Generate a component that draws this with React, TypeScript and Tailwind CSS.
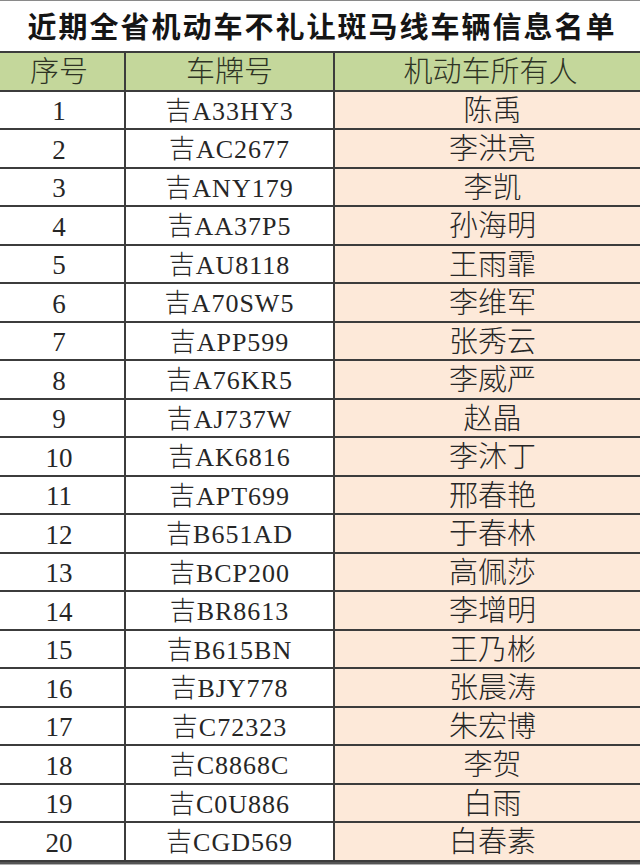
import React from "react";

const rows: [string, string, string][] = [
  ["1", "吉A33HY3", "陈禹"],
  ["2", "吉AC2677", "李洪亮"],
  ["3", "吉ANY179", "李凯"],
  ["4", "吉AA37P5", "孙海明"],
  ["5", "吉AU8118", "王雨霏"],
  ["6", "吉A70SW5", "李维军"],
  ["7", "吉APP599", "张秀云"],
  ["8", "吉A76KR5", "李威严"],
  ["9", "吉AJ737W", "赵晶"],
  ["10", "吉AK6816", "李沐丁"],
  ["11", "吉APT699", "邢春艳"],
  ["12", "吉B651AD", "于春林"],
  ["13", "吉BCP200", "高佩莎"],
  ["14", "吉BR8613", "李增明"],
  ["15", "吉B615BN", "王乃彬"],
  ["16", "吉BJY778", "张晨涛"],
  ["17", "吉C72323", "朱宏博"],
  ["18", "吉C8868C", "李贺"],
  ["19", "吉C0U886", "白雨"],
  ["20", "吉CGD569", "白春素"],
];

const font = {
  fontFamily: '"Liberation Serif", "Noto Sans CJK SC", serif',
};

export default function App() {
  return (
    <div className="w-[640px] h-[865px] bg-white overflow-hidden text-[#262626]" style={font}>
      <div className="h-[51px] border-t border-[#8a8a8a] flex items-center justify-center pl-[4px] pt-[5px]">
        <span className="text-[29px] font-bold text-[#151515] leading-none tracking-[2px] whitespace-nowrap">
          近期全省机动车不礼让斑马线车辆信息名单
        </span>
      </div>
      <div className="border-t-2 border-[#3c3c3c]">
        <div className="grid grid-cols-[126px_209px_1fr] h-[38.5px] bg-[#c4d79b] border-b-2 border-[#3c3c3c] text-[29px] font-light text-[#2e3324]">
          <div className="border-r-2 border-[#3c3c3c] flex items-center justify-center pt-[3px] pr-[6px] leading-none">序号</div>
          <div className="border-r-2 border-[#3c3c3c] flex items-center justify-center pt-[3px] leading-none">车牌号</div>
          <div className="flex items-center justify-center pt-[3px] pl-[6px] leading-none">机动车所有人</div>
        </div>
        {rows.map(([n, plate, name]) => (
          <div
            key={n}
            className="grid grid-cols-[126px_209px_1fr] h-[38.5px] border-b-2 border-[#3c3c3c] font-light"
          >
            <div className="bg-white border-r-2 border-[#3c3c3c] flex items-center justify-center pt-[4px] pr-[6px] leading-none text-[27px]">
              {n}
            </div>
            <div className="bg-white border-r-2 border-[#3c3c3c] flex items-center justify-center pt-[4px] leading-none tracking-[1px] text-[26px]">
              {plate}
            </div>
            <div className="bg-[#fde9d9] flex items-center justify-center pt-[3px] pl-[10px] leading-none text-[29px]">
              {name}
            </div>
          </div>
        ))}
        <div className="h-[2px] bg-[#555555]" />
        <div className="h-[2px] bg-[#b0b0b0]" />
      </div>
    </div>
  );
}
